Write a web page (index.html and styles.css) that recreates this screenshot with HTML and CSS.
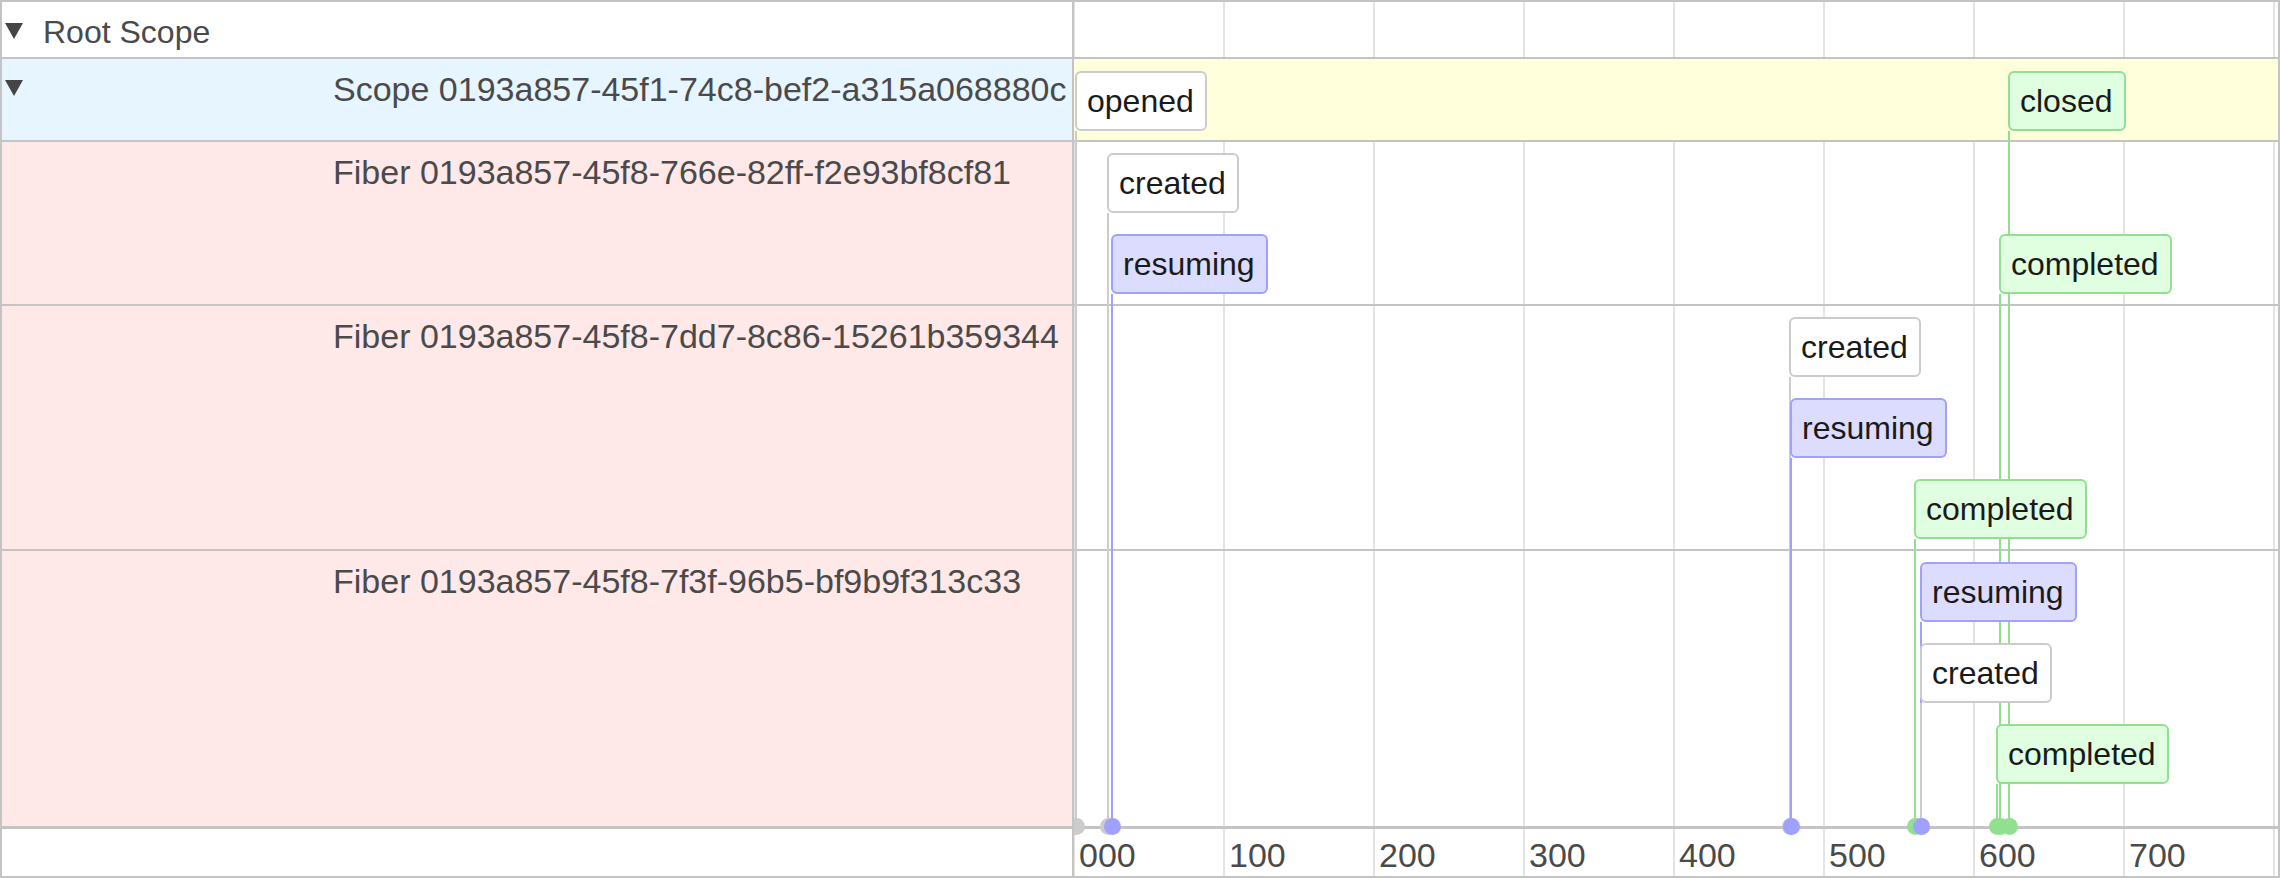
FILE: index.html
```html
<!DOCTYPE html>
<html lang="en">
<head>
<meta charset="utf-8">
<title>Trace</title>
<link rel="stylesheet" href="styles.css">
</head>
<body>
<div class="trace">
  <div class="cell title root-title row-1">
    <svg class="twisty" viewBox="0 0 18 16" width="18" height="16"><polygon points="0,0 18,0 9,16"/></svg>
    <span class="name">Root Scope</span>
  </div>
  <div class="cell lane grid-bg row-1"></div>

  <div class="cell title scope-title row-2">
    <svg class="twisty" viewBox="0 0 18 16" width="18" height="16"><polygon points="0,0 18,0 9,16"/></svg>
    <span class="name deep">Scope 0193a857-45f1-74c8-bef2-a315a068880c</span>
  </div>
  <div class="cell lane scope-lane row-2"></div>

  <div class="cell title fiber-title row-3">
    <span class="spacer"></span>
    <span class="name deep">Fiber 0193a857-45f8-766e-82ff-f2e93bf8cf81</span>
  </div>
  <div class="cell lane grid-bg row-3"></div>

  <div class="cell title fiber-title row-4">
    <span class="spacer"></span>
    <span class="name deep">Fiber 0193a857-45f8-7dd7-8c86-15261b359344</span>
  </div>
  <div class="cell lane grid-bg row-4"></div>

  <div class="cell title fiber-title row-5">
    <span class="spacer"></span>
    <span class="name deep">Fiber 0193a857-45f8-7f3f-96b5-bf9b9f313c33</span>
  </div>
  <div class="cell lane grid-bg row-5"></div>

  <div class="cell axis-left row-6"></div>
  <div class="cell axis grid-bg row-6">
    <span class="tick">000</span>
    <span class="tick">100</span>
    <span class="tick">200</span>
    <span class="tick">300</span>
    <span class="tick">400</span>
    <span class="tick">500</span>
    <span class="tick">600</span>
    <span class="tick">700</span>
  </div>

  <div class="events">
    <div class="event neutral" style="left:1px;top:12px;height:764px"><span class="label">opened</span><span class="stem"></span><span class="dot"></span></div>
    <div class="event done" style="left:934px;top:12px;height:764px"><span class="label">closed</span><span class="stem"></span><span class="dot"></span></div>

    <div class="event neutral" style="left:33px;top:94px;height:682px"><span class="label">created</span><span class="stem"></span><span class="dot"></span></div>
    <div class="event run" style="left:37px;top:175px;height:601px"><span class="label">resuming</span><span class="stem"></span><span class="dot"></span></div>
    <div class="event done" style="left:925px;top:175px;height:601px"><span class="label">completed</span><span class="stem"></span><span class="dot"></span></div>

    <div class="event neutral" style="left:715px;top:258px;height:518px"><span class="label">created</span><span class="stem"></span><span class="dot"></span></div>
    <div class="event run" style="left:716px;top:339px;height:437px"><span class="label">resuming</span><span class="stem"></span><span class="dot"></span></div>
    <div class="event done" style="left:840px;top:420px;height:356px"><span class="label">completed</span><span class="stem"></span><span class="dot"></span></div>

    <div class="event run" style="left:846px;top:503px;height:273px"><span class="label">resuming</span><span class="stem"></span><span class="dot"></span></div>
    <div class="event neutral" style="left:846px;top:584px;height:192px"><span class="label">created</span><span class="stem"></span><span class="dot"></span></div>
    <div class="event done" style="left:922px;top:665px;height:111px"><span class="label">completed</span><span class="stem"></span><span class="dot"></span></div>
  </div>
</div>
</body>
</html>
```

FILE: styles.css
```css
html, body {
  margin: 0;
  padding: 0;
  overflow: hidden;
  background: #ffffff;
}

.trace {
  box-sizing: border-box;
  width: 2280px;
  height: 878px;
  border: 2px solid #c4c4c4;
  background: #c4c4c4;
  display: grid;
  grid-template-columns: 1070px 1fr;
  grid-template-rows: 55px 81px 162px 243px 1fr 48px;
  gap: 2px;
  font-family: "Liberation Sans", Arial, Helvetica, sans-serif;
}

.cell {
  background: #ffffff;
  min-width: 0;
  min-height: 0;
}

.title { grid-column: 1; }
.lane, .axis { grid-column: 2; }
.axis-left { grid-column: 1; }

.row-1 { grid-row: 1; }
.row-2 { grid-row: 2; }
.row-3 { grid-row: 3; }
.row-4 { grid-row: 4; }
.row-5 { grid-row: 5; }
.row-6 { grid-row: 6; }

.title {
  display: flex;
  align-items: flex-start;
  padding: 10px 0 0 3px;
  font-size: 34px;
  line-height: 40px;
  color: #4a4a4a;
  white-space: nowrap;
  overflow: hidden;
}

.root-title {
  font-size: 32px;
}

.twisty {
  flex: none;
  margin: 11px 20px 0 0;
  fill: #454545;
}

.spacer {
  flex: none;
  width: 38px;
}

.name.deep {
  margin-left: 290px;
}

.scope-title {
  background: #e6f5ff;
}

.fiber-title {
  background: #ffe8e8;
}

.grid-bg {
  background-color: #ffffff;
  background-image: linear-gradient(90deg, #e4e4e4 2px, transparent 2px);
  background-size: 150px 100%;
  background-position: 149px 0;
  background-repeat: repeat-x;
}

.scope-lane {
  background: #ffffdb;
}

.axis-left {
  border-top: 1px solid #c4c4c4;
}

.axis {
  border-top: 1px solid #c4c4c4;
  display: flex;
  padding-top: 4px;
  font-size: 34px;
  line-height: 44px;
  color: #4a4a4a;
}

.tick {
  flex: none;
  width: 150px;
  box-sizing: border-box;
  padding-left: 5px;
}

.events {
  grid-column: 2;
  grid-row: 2 / 7;
  position: relative;
  overflow: hidden;
  pointer-events: none;
}

.event {
  position: absolute;
  display: flex;
  flex-direction: column;
  align-items: flex-start;
}

.label {
  position: relative;
  z-index: 3;
  flex: none;
  box-sizing: border-box;
  height: 60px;
  padding: 7px 11px 7px 10px;
  border: 2px solid #cccccc;
  border-radius: 6px;
  background: #ffffff;
  color: #1a1a1a;
  font-size: 32px;
  line-height: 42px;
  white-space: nowrap;
}

.stem {
  flex: 1;
  width: 2px;
  background: #cccccc;
}

.dot {
  position: relative;
  z-index: 1;
  flex: none;
  width: 17px;
  height: 17px;
  margin: -8px 0 0 -7px;
  border-radius: 50%;
  background: #cccccc;
}

.run .label {
  background: #dcdcff;
  border-color: #a0a0ff;
}

.run .stem,
.run .dot {
  background: #a0a0ff;
}

.run .dot {
  z-index: 2;
}

.done .label {
  background: #e0ffe0;
  border-color: #90e090;
}

.done .stem,
.done .dot {
  background: #90e090;
}
```
